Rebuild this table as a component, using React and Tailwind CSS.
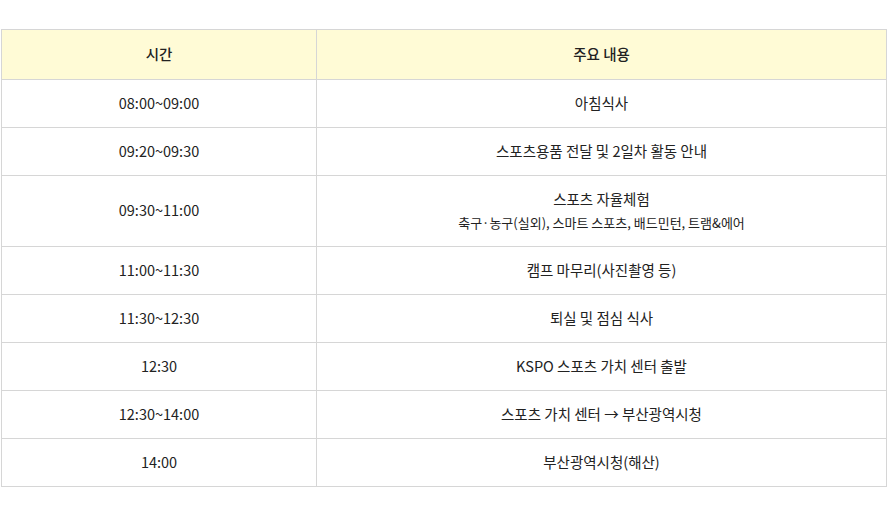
import React from "react";

const rows = [
  { time: "08:00~09:00", content: "아침식사" },
  { time: "09:20~09:30", content: "스포츠용품 전달 및 2일차 활동 안내" },
  {
    time: "09:30~11:00",
    content: "스포츠 자율체험",
    sub: "축구·농구(실외), 스마트 스포츠, 배드민턴, 트램&에어",
  },
  { time: "11:00~11:30", content: "캠프 마무리(사진촬영 등)" },
  { time: "11:30~12:30", content: "퇴실 및 점심 식사" },
  { time: "12:30", content: "KSPO 스포츠 가치 센터 출발" },
  { time: "12:30~14:00", content: "스포츠 가치 센터 → 부산광역시청" },
  { time: "14:00", content: "부산광역시청(해산)" },
];

const App = () => {
  return (
    <div
      className="min-h-screen bg-white pt-[29px] pl-px text-[14.5px] text-[#222]"
      style={{ fontFamily: '"Noto Sans CJK KR", "Noto Sans", sans-serif' }}
    >
      <table className="w-[886px] border-collapse table-fixed text-center">
        <colgroup>
          <col className="w-[315px]" />
          <col />
        </colgroup>
        <thead>
          <tr className="h-[50px] bg-[#fffbd6]">
            <th className="border border-[#d6d6d6] font-medium pb-[2px]">시간</th>
            <th className="border border-[#d6d6d6] font-medium pb-[2px]">
              주요 내용
            </th>
          </tr>
        </thead>
        <tbody>
          {rows.map((row, i) => (
            <tr key={i} className={row.sub ? "h-[71px]" : "h-[48px]"}>
              <td className="border border-[#d6d6d6] pb-[2px]">{row.time}</td>
              <td className="border border-[#d6d6d6] pb-[2px]">
                <div className="leading-[22px]">{row.content}</div>
                {row.sub && (
                  <div className="text-[13px] leading-[20px] mt-[3px]">
                    {row.sub}
                  </div>
                )}
              </td>
            </tr>
          ))}
        </tbody>
      </table>
    </div>
  );
};

export default App;
